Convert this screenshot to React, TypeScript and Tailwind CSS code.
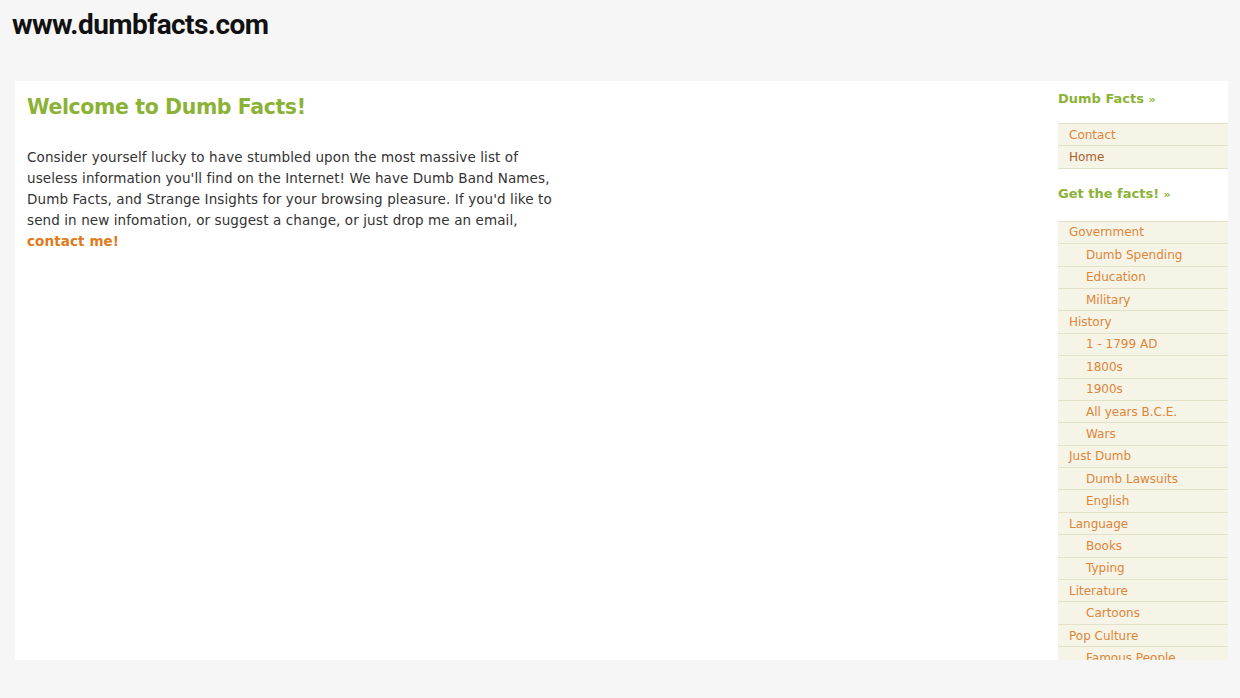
const facts = [
  { label: 'Government', sub: false },
  { label: 'Dumb Spending', sub: true },
  { label: 'Education', sub: true },
  { label: 'Military', sub: true },
  { label: 'History', sub: false },
  { label: '1 - 1799 AD', sub: true },
  { label: '1800s', sub: true },
  { label: '1900s', sub: true },
  { label: 'All years B.C.E.', sub: true },
  { label: 'Wars', sub: true },
  { label: 'Just Dumb', sub: false },
  { label: 'Dumb Lawsuits', sub: true },
  { label: 'English', sub: true },
  { label: 'Language', sub: false },
  { label: 'Books', sub: true },
  { label: 'Typing', sub: true },
  { label: 'Literature', sub: false },
  { label: 'Cartoons', sub: true },
  { label: 'Pop Culture', sub: false },
  { label: 'Famous People', sub: true }
]

function NavRow ({ label, sub, visited }: Readonly<{ label: string, sub?: boolean, visited?: boolean }>) {
  return (
    <li className="h-[22.4px] flex items-center border-t border-[#e4e1c9] bg-[#f6f4e7]">
      <a
        href="#"
        className={`${sub ? 'pl-[28px]' : 'pl-[11px]'} ${visited ? 'text-[#a9612b]' : 'text-[#dd8538]'} text-[12px] leading-none`}
      >
        {label}
      </a>
    </li>
  )
}

export default function App () {
  return (
    <div className="w-[1240px] h-[698px] bg-[#f6f6f6] overflow-hidden font-['DejaVu_Sans',sans-serif]">
      <header className="h-[81px] pl-[12px] pt-[4px]">
        <h1 className="font-['Liberation_Sans_Narrow',Roboto,sans-serif] font-bold text-[28px] text-[#111] tracking-[-0.55px]">
          www.dumbfacts.com
        </h1>
      </header>
      <main className="ml-[15px] w-[1213px] h-[579px] bg-white flex overflow-hidden">
        <section className="flex-1 pl-[12px] pt-[12px]">
          <h2 className="text-[#8bb236] font-bold text-[20.5px] tracking-[-0.4px] leading-[28px]">
            Welcome to Dumb Facts!
          </h2>
          <p className="mt-[26px] w-[535px] text-[13.5px] tracking-[0.1px] leading-[21px] text-[#333]">
            Consider yourself lucky to have stumbled upon the most massive list of useless information you'll find on the Internet! We have Dumb Band Names, Dumb Facts, and Strange Insights for your browsing pleasure. If you'd like to send in new infomation, or suggest a change, or just drop me an email,{' '}
            <a href="#" className="text-[#e07a1c] font-bold">contact me!</a>
          </p>
        </section>
        <aside className="w-[170px] shrink-0">
          <h3 className="h-[42px] pt-[8px] text-[#8bb236] font-bold text-[13px]">Dumb Facts <span className="text-[11px]">»</span></h3>
          <ul className="border-b border-[#e4e1c9]">
            <NavRow label="Contact" />
            <NavRow label="Home" visited />
          </ul>
          <h3 className="h-[52px] pt-[15px] text-[#8bb236] font-bold text-[13px]">Get the facts! <span className="text-[11px]">»</span></h3>
          <ul>
            {facts.map((f) => (
              <NavRow key={f.label} label={f.label} sub={f.sub} />
            ))}
          </ul>
        </aside>
      </main>
    </div>
  )
}
